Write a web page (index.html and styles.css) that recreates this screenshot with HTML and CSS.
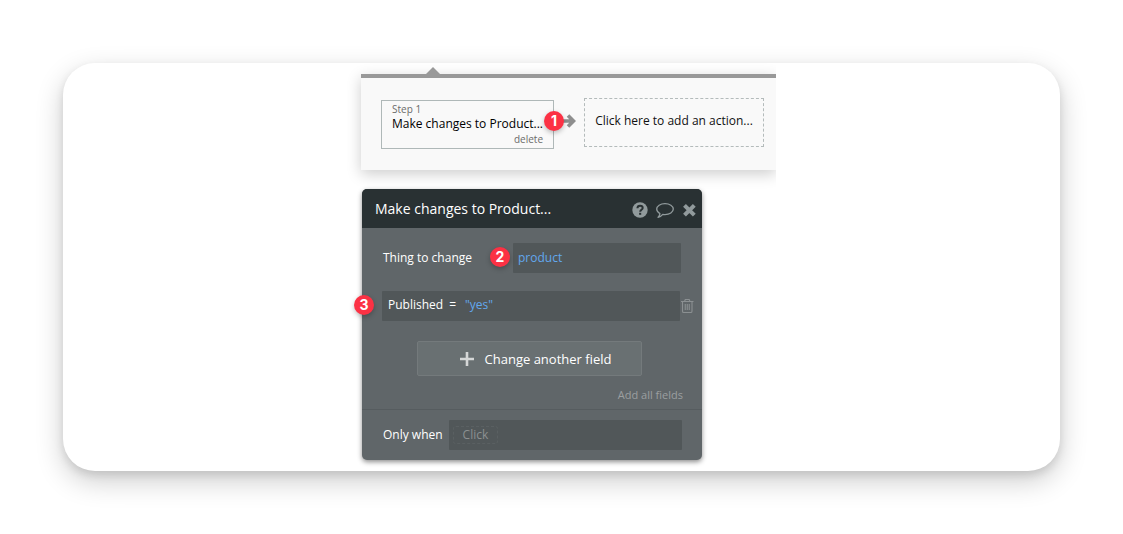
FILE: index.html
```html
<!DOCTYPE html>
<html lang="en">
<head>
    <meta charset="UTF-8">
    <meta name="viewport" content="width=device-width, initial-scale=1.0">
    <title>Make changes to Product</title>
    <link rel="stylesheet" href="styles.css">
</head>
<body>
    <main class="frame">
        <div class="editor">
            <section class="workflow">
                <div class="step">
                    <span class="step-number">Step 1</span>
                    <span class="step-name">Make changes to Product...</span>
                    <button type="button" class="step-delete">delete</button>
                    <span class="badge badge-step">1</span>
                </div>
                <svg class="arrow" width="14" height="16" viewBox="0 0 14 16" aria-hidden="true">
                    <path d="M0 8h11M6 2.500l5.500 5.500L6 13.500" fill="none" stroke="#8e8e8e" stroke-width="3.600"/>
                </svg>
                <button type="button" class="add-action">Click here to add an action...</button>
            </section>

            <section class="popup">
                <header class="popup-header">
                    <h1>Make changes to Product...</h1>
                    <button type="button" class="icon-button" aria-label="Help">
                        <svg width="16" height="16" viewBox="0 0 16 16">
                            <circle cx="8" cy="8" r="7.700" fill="#919a9c"/>
                            <path d="M5.400 6.200C5.500 4.500 6.500 3.700 8 3.700c1.600 0 2.700.9 2.700 2.200 0 1.800-2.500 1.900-2.500 3.800" fill="none" stroke="#293133" stroke-width="2"/>
                            <path d="M7.100 10.800h2.100v2H7.100z" fill="#293133"/>
                        </svg>
                    </button>
                    <button type="button" class="icon-button" aria-label="Comment">
                        <svg width="18" height="16" viewBox="0 0 18 16">
                            <path d="M9 1.600c4.600 0 8.300 2.400 8.300 5.500s-3.700 5.500-8.300 5.500c-.8 0-1.500-.1-2.200-.2-1.200 1.500-2.600 2.500-4.700 2.900 1-.9 1.700-2.100 1.800-3.700C1.900 10.500.7 8.900.7 7.100c0-3.100 3.700-5.500 8.300-5.500z" fill="none" stroke="#919a9c" stroke-width="1.300" stroke-linejoin="round"/>
                        </svg>
                    </button>
                    <button type="button" class="icon-button" aria-label="Close">
                        <svg width="14" height="14" viewBox="0 0 14 14">
                            <path d="M2.500 2.300l9.800 9.800M12.300 2.300l-9.800 9.800" stroke="#919a9c" stroke-width="4"/>
                        </svg>
                    </button>
                </header>

                <form class="popup-body">
                    <div class="row">
                        <label for="thing">Thing to change</label>
                        <span class="badge badge-thing">2</span>
                        <input type="text" id="thing" class="field thing-field" value="product">
                    </div>

                    <div class="row change-row">
                        <span class="badge badge-change">3</span>
                        <div class="field change-field">
                            <label for="published">Published</label>
                            <span>=</span>
                            <input type="text" id="published" class="value" value="&quot;yes&quot;">
                        </div>
                        <button type="button" class="icon-button" aria-label="Delete field">
                            <svg width="14" height="16" viewBox="0 0 14 16">
                                <path d="M1 3.500h12.500M4.500 3.500l.8-2h3.900l.8 2M2.500 3.500v9.700c0 .8.400 1.300 1.200 1.300h7.100c.8 0 1.200-.5 1.200-1.300V3.500M5.250 6v6M7.250 6v6M9.250 6v6" fill="none" stroke="#8b9092" stroke-width="1.100"/>
                            </svg>
                        </button>
                    </div>

                    <button type="button" class="change-another">
                        <svg width="14" height="14" viewBox="0 0 14 14" aria-hidden="true">
                            <path d="M7 0v14M0 7h14" stroke="#d5d7d7" stroke-width="2.600"/>
                        </svg>
                        Change another field
                    </button>
                    <a href="#" class="add-all">Add all fields</a>

                    <div class="condition">
                        <span>Only when</span>
                        <div class="field condition-field">
                            <button type="button" class="click">Click</button>
                        </div>
                    </div>
                </form>
            </section>
        </div>
    </main>
</body>
</html>
```

FILE: styles.css
```css
* {
    box-sizing: border-box;
}

body {
    margin: 0;
    padding: 63px;
    background-color: #fff;
    font-family: "Open Sans", sans-serif;
    font-size: 12px;
    line-height: 16px;
}

button,
input {
    font: inherit;
    border: none;
    background: none;
    padding: 0;
}

button {
    cursor: pointer;
}

.frame {
    border-radius: 32px;
    background-color: #fff;
    box-shadow: 0 4px 8px rgba(0, 0, 0, 0.1), 0 10px 28px rgba(0, 0, 0, 0.2);
}

.editor {
    max-width: 429px;
    margin: 0 auto;
    padding: 11px 0 11px 14px;
    overflow: hidden;
}

/* Workflow strip */
.workflow {
    position: relative;
    display: flex;
    align-items: center;
    height: 96px;
    padding: 0 12px 0 20px;
    border-top: 4px solid #999;
    background-color: #f9f9f9;
    box-shadow: 0 4px 14px rgba(0, 0, 0, 0.2);
}

.workflow::before {
    content: "";
    position: absolute;
    top: -11px;
    left: 65px;
    border: 7px solid transparent;
    border-top: none;
    border-bottom-color: #999;
}

.step {
    position: relative;
    display: flex;
    flex-direction: column;
    width: 173px;
    padding: 1px 10px 2px;
    border: 1px solid #afb8b8;
    color: #000;
}

.step-number,
.step-delete {
    color: #6b6b6b;
    font-size: 10px;
    line-height: 14px;
}

.step-name {
    white-space: nowrap;
}

.step-delete {
    align-self: flex-end;
}

.arrow {
    margin: 0 8px 6px;
}

.add-action {
    flex: 1;
    height: 49px;
    margin-bottom: 4px;
    padding-bottom: 2px;
    border: 1px dashed #b4bbbb;
    color: #111;
    white-space: nowrap;
}

/* Numbered markers */
.badge {
    position: absolute;
    width: 20px;
    border-radius: 50%;
    background-color: #fc3144;
    box-shadow: 0 2px 5px rgba(0, 0, 0, 0.25);
    color: #fff;
    font-family: Inter, sans-serif;
    font-size: 14px;
    font-weight: 700;
    line-height: 20px;
    text-align: center;
}

.badge-step {
    top: 10px;
    right: -11px;
}

.badge-thing {
    top: 4px;
    left: 107px;
}

.badge-change {
    top: 4px;
    left: -28px;
}

/* Action popup */
.popup {
    max-width: 340px;
    margin: 19px 0 0 1px;
    border-radius: 5px;
    background-color: #606669;
    box-shadow: 0 2px 5px rgba(0, 0, 0, 0.45);
    color: #fff;
    position: relative;
}

.popup-header {
    display: flex;
    align-items: center;
    gap: 8px;
    height: 39px;
    padding: 2px 6px 0 13px;
    border-radius: 5px 5px 0 0;
    background-color: #293133;
}

.popup-header h1 {
    flex: 1;
    margin: 0;
    padding-bottom: 2px;
    font-size: 14px;
    font-weight: 400;
    line-height: 20px;
}

.icon-button {
    display: flex;
}

.popup-body {
    display: flex;
    flex-direction: column;
    padding-top: 15px;
}

.row {
    position: relative;
    display: flex;
    align-items: center;
    justify-content: space-between;
    margin: 0 21px 18px;
}

.field {
    height: 30px;
    background-color: #515759;
    border-radius: 1px;
}

.thing-field {
    width: 168px;
    padding: 0 5px 2px;
    color: #62a7ee;
}

.change-row {
    margin-right: 8px;
    margin-bottom: 20px;
    margin-left: 20px;
}

.change-field {
    display: flex;
    flex: 1;
    gap: 6px;
    padding: 6px;
}

.value {
    flex: 1;
    min-width: 0;
    height: 16px;
    padding-left: 3px;
    color: #62a7ee;
}

.change-another {
    display: flex;
    align-items: center;
    justify-content: center;
    gap: 11px;
    width: 225px;
    height: 35px;
    margin-left: 55px;
    padding-left: 12px;
    border: 1px solid #747a7c;
    border-radius: 2px;
    background-color: #697072;
    color: #fff;
    font-size: 13px;
}

.add-all {
    align-self: flex-end;
    margin: 11px 19px 6px 0;
    color: #9b9fa0;
    font-size: 11px;
    text-decoration: none;
}

.condition {
    display: flex;
    align-items: center;
    gap: 6px;
    padding: 10px 20px 10px 21px;
    border-top: 1px solid #565c5f;
}

.condition-field {
    display: flex;
    align-items: center;
    flex: 1;
    padding-left: 4px;
}

.click {
    padding: 0 9px;
    border: 1px dashed #5a6062;
    border-radius: 3px;
    color: #8c9091;
}
```
